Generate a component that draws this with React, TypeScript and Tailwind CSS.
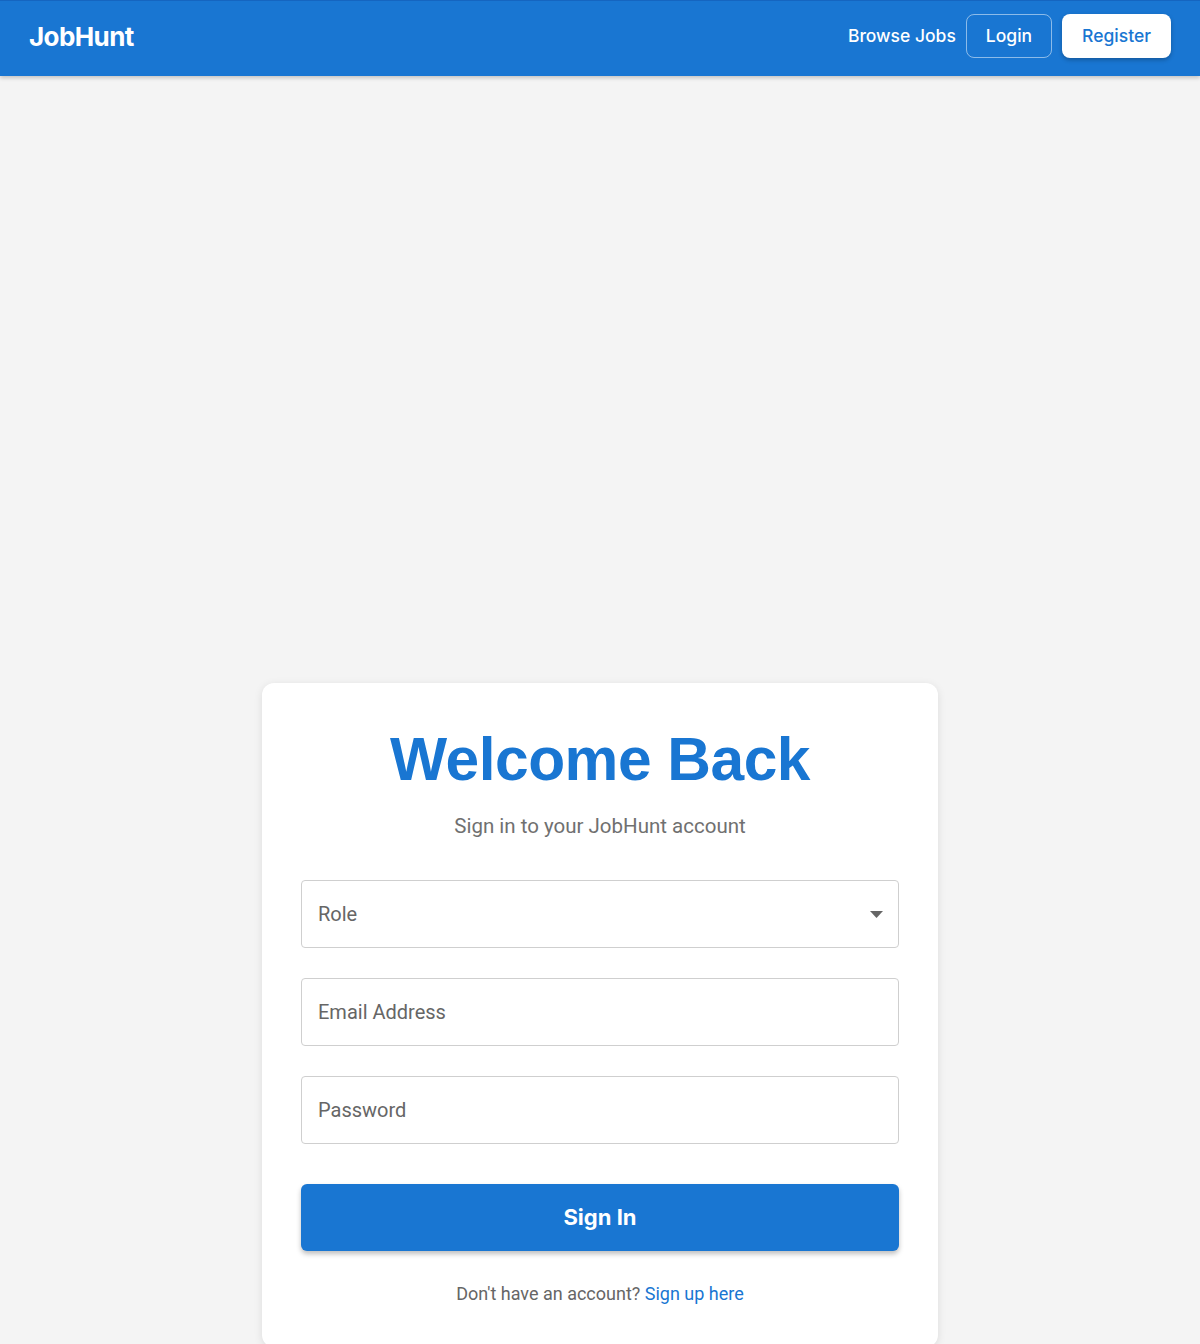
import React, { useState } from 'react';

const App: React.FC = () => {
  const [role, setRole] = useState('');
  const [email, setEmail] = useState('');
  const [password, setPassword] = useState('');

  return (
    <div className="min-h-screen bg-[#f4f4f4] font-['Roboto',sans-serif]">
      {/* Header */}
      <header className="h-[76px] bg-[#1976d2] border-t border-[#1565c0] shadow-[0_2px_4px_rgba(0,0,0,0.2)] flex items-center justify-between pl-[29px] pr-[29px] pb-[5px]">
        <span className="font-['Inter',sans-serif] text-[26px] font-bold text-white tracking-[-0.6px]">JobHunt</span>
        <nav className="flex items-center gap-[10px] font-['Inter',sans-serif]">
          <a className="text-white text-[17.5px] font-medium">Browse Jobs</a>
          <button className="h-[44px] px-[19px] rounded-[8px] border border-white/50 text-white text-[17.5px] font-medium">
            Login
          </button>
          <button className="h-[44px] px-[20px] rounded-[8px] bg-white text-[#1976d2] text-[17.5px] font-medium shadow-[0_2px_4px_rgba(0,0,0,0.25)]">
            Register
          </button>
        </nav>
      </header>

      {/* Login card */}
      <main className="flex justify-center pt-[607px]">
        <div className="w-[676px] bg-white rounded-[12px] shadow-[0_2px_8px_rgba(0,0,0,0.1)] px-[39px] pt-[44px] pb-[40px]">
          <h1 className="text-center font-['Liberation_Sans',Arial,sans-serif] font-bold text-[60.5px] leading-[64px] text-[#1976d2] tracking-[-0.5px]">
            Welcome Back
          </h1>
          <p className="text-center text-[20.5px] text-[#707070] mt-[20px]">Sign in to your JobHunt account</p>

          <div className="mt-[38px] flex flex-col gap-[30px]">
            <div className="relative">
              <select
                value={role}
                onChange={(e) => setRole(e.target.value)}
                className="w-full h-[68px] appearance-none bg-white border border-[#cfcfcf] rounded-[4px] pl-[16px] pr-[40px] text-[20px] text-[#666] outline-none"
              >
                <option value="">Role</option>
                <option value="seeker">Job Seeker</option>
                <option value="employer">Employer</option>
              </select>
              <svg className="absolute right-[16px] top-[31px] pointer-events-none" width="13" height="7" viewBox="0 0 13 7">
                <path d="M0 0 L13 0 L6.5 7 Z" fill="#666" />
              </svg>
            </div>
            <input
              type="email"
              value={email}
              onChange={(e) => setEmail(e.target.value)}
              placeholder="Email Address"
              className="w-full h-[68px] border border-[#cfcfcf] rounded-[4px] px-[16px] text-[20px] text-[#333] placeholder:text-[#666] outline-none"
            />
            <input
              type="password"
              value={password}
              onChange={(e) => setPassword(e.target.value)}
              placeholder="Password"
              className="w-full h-[68px] border border-[#cfcfcf] rounded-[4px] px-[16px] text-[20px] text-[#333] placeholder:text-[#666] outline-none"
            />
          </div>

          <button className="mt-[40px] w-full h-[67px] rounded-[6px] bg-[#1976d2] text-white text-[22px] font-bold font-['Inter',sans-serif] shadow-[0_3px_5px_rgba(0,0,0,0.25)]">
            Sign In
          </button>

          <p className="mt-[29px] text-center text-[18px] text-[#666]">
            Don't have an account? <a className="text-[#1976d2]">Sign up here</a>
          </p>
        </div>
      </main>
    </div>
  );
};

export default App;
